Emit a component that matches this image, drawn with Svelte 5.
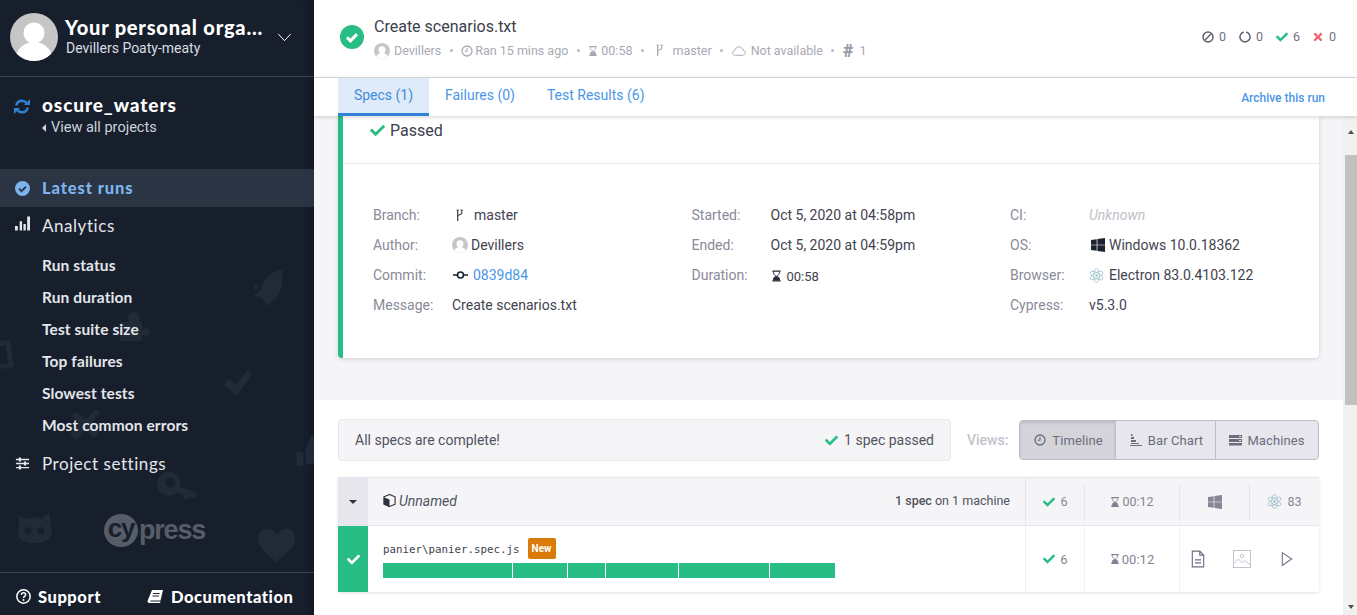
<script>
  const subNav = ['Run status', 'Run duration', 'Test suite size', 'Top failures', 'Slowest tests', 'Most common errors'];
  const bars = [129, 54, 37, 72, 90, 65];
  const checkD = 'M173.9 439.4l-166.4-166.4c-10-10-10-26.2 0-36.2l36.2-36.2c10-10 26.2-10 36.2 0L192 312.7 432.1 72.6c10-10 26.2-10 36.2 0l36.2 36.2c10 10 10 26.2 0 36.2l-294.4 294.4c-10 10-26.2 10-36.2 0z';
  const winD = 'M0 2.200 6.500 1.300v6.300H0zM7.300 1.200 16 0v7.600H7.300zM0 8.400h6.500v6.300L0 13.800zM7.300 8.400H16V16l-8.700-1.200z';
</script>

{#snippet check(cls)}
  <svg class="ic {cls}" viewBox="0 0 512 512" fill="currentColor"><path d={checkD} /></svg>
{/snippet}
{#snippet hourglass(cls)}
  <svg class="ic {cls}" viewBox="0 0 12 12" fill="none" stroke="currentColor">
    <path d="M1.500.7h9M1.500 11.300h9" stroke-width="1.400" />
    <path d="M2.800 1v2c0 1.600 2 2.300 2.800 3-.8.7-2.800 1.400-2.800 3v2M9.200 1v2c0 1.600-2 2.300-2.800 3 .8.7 2.800 1.400 2.800 3v2" stroke-width="1" />
    <path d="M2.800 11V9c0-1.300 2-2.200 3.200-3 1.200.8 3.200 1.700 3.200 3v2z" fill="currentColor" stroke="none" />
  </svg>
{/snippet}
{#snippet clock(cls)}
  <svg class="ic {cls}" viewBox="0 0 12 12"><circle cx="6" cy="6" r="5" fill="none" stroke="currentColor" stroke-width="1.300" /><path d="M6 3v3.300H3.800" fill="none" stroke="currentColor" stroke-width="1.100" /></svg>
{/snippet}
{#snippet branch(cls)}
  <svg class="ic {cls}" viewBox="0 0 10 14" fill="none" stroke="currentColor"><path d="M3 1v12" stroke-width="1.400" /><path d="M3 8c0-2 4-1.500 4.500-3.500V1" stroke-width="1.200" /><path d="M1.500 1h3M6 1h3" stroke-width="1" /></svg>
{/snippet}
{#snippet avatar(cls)}
  <svg class="ic {cls}" viewBox="0 0 48 48">
    <defs><clipPath id="av-{cls}"><circle cx="24" cy="24" r="24" /></clipPath></defs>
    <circle cx="24" cy="24" r="24" fill="#c6c6c6" />
    <g clip-path="url(#av-{cls})" fill="#fff"><circle cx="24" cy="20" r="10.500" /><ellipse cx="24" cy="45" rx="18" ry="16" /></g>
  </svg>
{/snippet}
{#snippet windows(cls)}
  <svg class="ic {cls}" viewBox="0 0 16 16" fill="currentColor"><path d={winD} /></svg>
{/snippet}
{#snippet electron(cls)}
  <svg class="ic {cls}" viewBox="0 0 16 16" fill="none" stroke="#9fc4ca" stroke-width=".9">
    <ellipse cx="8" cy="8" rx="7.500" ry="3" transform="rotate(30 8 8)" />
    <ellipse cx="8" cy="8" rx="7.500" ry="3" transform="rotate(-30 8 8)" />
    <ellipse cx="8" cy="8" rx="7.500" ry="3" transform="rotate(90 8 8)" />
    <circle cx="8" cy="8" r="1" fill="#9fc4ca" />
  </svg>
{/snippet}

<div class="app">
  <aside class="side">
    <svg class="deco" viewBox="0 0 314 615" width="314" height="615" fill="#212b38">
      <path d="M282 270c-12 2-20 10-22 21l-6 5 6 1 5 5 1 5 5-6c9-4 13-16 11-31zM258 284l-5 2 3 5zM268 300l2 5 3-6z" />
      <path d="M120 322h9c-2-7 1-10 5-10s7 3 5 10h3v8c5-3 8-1 8 2s-3 5-8 3v6h-22z" />
      <path d="M-8 342 10 340l4 27-20 3-1 6-8 1-1-30zM-3 347l-2 18 13-1-2-19z" />
      <path d="M224 385l5-6 7 6 11-15 5 4-15 22z" />
      <path d="M70 434l10-10-9-8 6-4 9 8 10-11 4 4-9 11 8 8-5 6-8-8-10 10z" />
      <path d="M296 452l7-1 1 14-7 1zM305 451l6-15 3-1v28l-8 2z" />
      <path d="M171 472a12 12 0 0 1 9 15l16 5-1 7-6-2-1 3-5-2 1-3-7-2a12 12 0 1 1-6-21zM170 478a5 5 0 1 0 2 .2z" />
      <path d="M19 515l7 4c5-2 11-2 15 0l8-6 2 14c3 9-2 16-17 16s-18-7-15-16zM28 527a3.500 4 0 1 0 .1 0zM41 527a3.500 4 0 1 0 .1 0z" fill-rule="evenodd" />
      <path d="M276 562c-9-8-18-14-18-24 0-7 6-10 11-9 4 1 7 3 8 6 2-4 6-7 10-6 6 0 8 6 8 10 0 9-10 15-19 23z" />
    </svg>

    <div class="logo"><span class="cy">cy</span><span class="press">press</span></div>

    <header class="org">
      {@render avatar('org-av')}
      <div class="org-txt">
        <div class="org-name">Your personal orga...</div>
        <div class="org-sub">Devillers Poaty-meaty</div>
      </div>
      <svg class="chev" viewBox="0 0 16 10"><path d="M1 1l7 7.500L15 1" fill="none" stroke="#fff" stroke-width="1.100" /></svg>
    </header>

    <div class="proj">
      <svg class="sync" viewBox="0 0 18 17" fill="none" stroke="#2f82d0" stroke-width="2.400">
        <path d="M3.200 7.500C3.800 4.500 6 2.700 9 2.700c2 0 3.500.8 4.600 2.300" />
        <path d="M14.800 9.500c-.6 3-2.800 4.800-5.800 4.800-2 0-3.500-.8-4.600-2.300" />
        <path d="M17 1v6h-6z" fill="#2f82d0" stroke="none" />
        <path d="M1 16v-6h6z" fill="#2f82d0" stroke="none" />
      </svg>
      <div>
        <div class="proj-name">oscure_waters</div>
        <div class="proj-back"><i class="caret"></i>View all projects</div>
      </div>
    </div>

    <nav class="nav">
      <a class="item on">
        <svg class="nav-ic" viewBox="0 0 14 14"><circle cx="7" cy="7" r="7" fill="#7db3ee" /><path d="M3.800 7.200l2.300 2.300 4.200-4.300" fill="none" stroke="#2a3442" stroke-width="1.700" /></svg>
        Latest runs
      </a>
      <a class="item up">
        <svg class="nav-ic tall" viewBox="0 0 16 16" fill="#e4e6ea"><path d="M0 10h3v5H0zM5 5h2.500v10H5zM9 8h2.500v7H9zM13 0h3v15h-3z" /></svg>
        Analytics
      </a>
      <ul class="sub">
        {#each subNav as s}<li>{s}</li>{/each}
      </ul>
      <a class="item">
        <svg class="nav-ic" viewBox="0 0 16 14" fill="#e4e6ea"><path d="M1 2h14v1.400H1zM1 6.300h14v1.400H1zM1 10.600h14V12H1z" /><path d="M4 .5h2.400v4.400H4zM9.500 4.800h2.400v4.400H9.500zM4 9.100h2.400v4.400H4z" /></svg>
        Project settings
      </a>
    </nav>

    <footer class="foot">
      <a class="f-link">
        <svg class="f-ic" viewBox="0 0 14 14"><circle cx="7" cy="7" r="6.200" fill="none" stroke="#fff" stroke-width="1.400" /><path d="M5 5.400C5 4.200 6 3.600 7 3.600c1.200 0 2 .7 2 1.700 0 1.500-2 1.500-2 3" fill="none" stroke="#fff" stroke-width="1.400" /><circle cx="7" cy="10.300" r=".9" fill="#fff" /></svg>
        Support
      </a>
      <a class="f-link">
        <svg class="f-ic book" viewBox="0 0 16 14"><path d="M5 0h11l-2.500 10.500H4c-1 0-1.300.9-.2 1h9.700l-.3 1.500H2.500C.8 13 .3 11.700.7 10.500zM6 3v1h6.500l.3-1zM5.500 5.500v1H12l.3-1z" fill="#fff" fill-rule="evenodd" /></svg>
        Documentation
      </a>
    </footer>
  </aside>

  <main class="main">
    <div class="top">
      <svg class="big-ok" viewBox="0 0 24 24"><circle cx="12" cy="12" r="12" fill="#27bd85" /><path d="M7 12.400l3.500 3.500 6.500-6.800" fill="none" stroke="#fff" stroke-width="3" /></svg>
      <div class="top-txt">
        <div class="title">Create scenarios.txt</div>
        <div class="meta">
          <span class="m">{@render avatar('m-av')}Devillers</span><i class="dot"></i>
          <span class="m">{@render clock('m-ic')}Ran 15 mins ago</span><i class="dot"></i>
          <span class="m">{@render hourglass('m-hg')}00:58</span><i class="dot"></i>
          <span class="m">{@render branch('m-br')}master</span><i class="dot"></i>
          <span class="m"><svg class="ic m-cloud" viewBox="0 0 14 10"><path d="M3.500 9.300C1.800 9.300.7 8.200.7 6.800c0-1.300 1-2.300 2.200-2.400C3.300 2.300 5 .8 7 .8c2 0 3.700 1.400 4 3.400 1.300.2 2.300 1.300 2.300 2.600 0 1.400-1.100 2.500-2.800 2.500z" fill="none" stroke="currentColor" stroke-width="1" /></svg>Not available</span><i class="dot"></i>
          <span class="m"><b class="hash">#</b>1</span>
        </div>
      </div>
      <div class="stats">
        <span class="st"><svg class="ic st-ic" viewBox="0 0 12 12" fill="none" stroke="#5f5f70" stroke-width="1.500"><circle cx="6" cy="6" r="5" /><path d="M3 9l6-6" /></svg>0</span>
        <span class="st"><svg class="ic st-ic" viewBox="0 0 12 12" fill="none" stroke="#5f5f70" stroke-width="1.500"><path d="M4.800 1.100a5 5 0 1 0 2.400 0" /></svg>0</span>
        <span class="st">{@render check('st-chk')}6</span>
        <span class="st"><svg class="ic st-x" viewBox="0 0 352 512" fill="currentColor"><path d="M242.700 256l100-100c12.300-12.300 12.300-32.200 0-44.500l-22.200-22.300c-12.300-12.300-32.200-12.300-44.500 0L176 189.300 75.900 89.200c-12.300-12.300-32.200-12.300-44.500 0L9.200 111.500c-12.300 12.300-12.300 32.200 0 44.500l100 100-100 100c-12.300 12.300-12.300 32.200 0 44.500l22.200 22.200c12.300 12.300 32.200 12.300 44.500 0L176 322.700l100 100c12.300 12.300 32.200 12.300 44.500 0l22.200-22.200c12.300-12.300 12.300-32.200 0-44.500z" /></svg>0</span>
      </div>
    </div>

    <div class="tabs">
      <a class="tab active">Specs (1)</a>
      <a class="tab">Failures (0)</a>
      <a class="tab">Test Results (6)</a>
      <a class="archive">Archive this run</a>
    </div>

    <div class="body">
      <div class="scroll">
        <section class="gray">
          <div class="card">
            <div class="passed">{@render check('pass-chk')}Passed</div>
            <div class="details">
              <div class="col">
                <div class="d"><span class="k">Branch:</span><span class="v">{@render branch('d-br')}master</span></div>
                <div class="d"><span class="k">Author:</span><span class="v">{@render avatar('d-av')}Devillers</span></div>
                <div class="d"><span class="k">Commit:</span><span class="v"><svg class="ic d-commit" viewBox="0 0 15 8"><path d="M0 4h4M11 4h4" stroke="#161f2d" stroke-width="1.500" /><circle cx="7.500" cy="4" r="3" fill="none" stroke="#161f2d" stroke-width="1.600" /></svg><a class="link">0839d84</a></span></div>
                <div class="d"><span class="k">Message:</span><span class="v">Create scenarios.txt</span></div>
              </div>
              <div class="col">
                <div class="d"><span class="k">Started:</span><span class="v">Oct 5, 2020 at 04:58pm</span></div>
                <div class="d"><span class="k">Ended:</span><span class="v">Oct 5, 2020 at 04:59pm</span></div>
                <div class="d"><span class="k">Duration:</span><span class="v dur">{@render hourglass('d-hg')}00:58</span></div>
              </div>
              <div class="col">
                <div class="d"><span class="k">CI:</span><span class="v unk">Unknown</span></div>
                <div class="d"><span class="k">OS:</span><span class="v">{@render windows('d-win')}Windows 10.0.18362</span></div>
                <div class="d"><span class="k">Browser:</span><span class="v">{@render electron('d-el')}Electron 83.0.4103.122</span></div>
                <div class="d"><span class="k">Cypress:</span><span class="v">v5.3.0</span></div>
              </div>
            </div>
          </div>
        </section>

        <section class="white">
          <div class="bar-row">
            <div class="status">
              <span>All specs are complete!</span>
              <span class="ok">{@render check('ok-chk')}1 spec passed</span>
            </div>
            <span class="views">Views:</span>
            <div class="btns">
              <button class="btn cur">{@render clock('b-ic')}Timeline</button>
              <button class="btn"><svg class="ic b-ic" viewBox="0 0 12 12" fill="currentColor"><path d="M0 11h12v1H0zM1 0h1.500v2H1zM1 3h3v2H1zM1 6h5v2H1zM1 9h8v1H1z" /></svg>Bar Chart</button>
              <button class="btn"><svg class="ic b-ic wide" viewBox="0 0 13 12" fill="currentColor"><path d="M0 1h13v3H0zM0 5h13v3H0zM0 9h13v2.500H0z" /><path d="M10 2h2v1h-2zM10 6h2v1h-2z" fill="#e6e6ec" /></svg>Machines</button>
            </div>
          </div>

          <div class="table">
            <div class="trow head">
              <div class="toggle"><i class="down"></i></div>
              <div class="name">
                <svg class="ic box" viewBox="0 0 14 14"><path d="M7 .5l6 2.500v8l-6 2.500L1 11V3z" fill="none" stroke="#2d3340" stroke-width="1.200" /><path d="M1 3.500l6 2.500v8L1 11z" fill="#2d3340" /></svg>
                <em>Unnamed</em>
                <span class="mach"><b>1 spec</b> on 1 machine</span>
              </div>
              <div class="hc"><span class="inner first">{@render check('t-chk')}6</span></div>
              <div class="hc"><span class="inner">{@render hourglass('t-hg')}00:12</span></div>
              <div class="hc"><span class="inner">{@render windows('t-win')}</span></div>
              <div class="hc"><span class="inner">{@render electron('t-el')}83</span></div>
            </div>
            <div class="trow item-row">
              <div class="okcell">{@render check('w-chk')}</div>
              <div class="spec">
                <div class="spec-top"><code>panier\panier.spec.js</code><span class="new">New</span></div>
                <div class="segs">
                  {#each bars as b}<i style="width:{b}px"></i>{/each}
                </div>
              </div>
              <div class="rc first-rc">{@render check('t-chk')}6</div>
              <div class="rc">{@render hourglass('t-hg')}00:12</div>
              <div class="rc actions">
                <svg class="ic act file" viewBox="0 0 16 20" fill="none" stroke="#6f6f80" stroke-width="1.300"><path d="M1.500 1h8.500l4.500 4.500V19h-13zM10 1v4.500h4.500M4.500 11h7M4.500 14.500h7" /></svg>
                <svg class="ic act img" viewBox="0 0 20 20" fill="none" stroke="#bdbdc8" stroke-width="1"><rect x=".5" y=".5" width="19" height="19" /><circle cx="10" cy="6.500" r="1.800" /><path d="M1 15l5-5 4 4 3-2.500 6 5" /></svg>
                <svg class="ic act play" viewBox="0 0 14 18" fill="none" stroke="#6f6f80" stroke-width="1.200"><path d="M1.500 1.500l11 7.500-11 7.500z" /></svg>
              </div>
            </div>
          </div>
        </section>
      </div>
      <div class="sb">
        <i class="sb-up"></i>
        <div class="sb-thumb"></div>
        <i class="sb-down"></i>
      </div>
    </div>
  </main>
</div>

<style>
  :global(body) { margin: 0; font-family: Roboto, sans-serif; background: #fff; overflow: hidden; }
  a { cursor: pointer; }
  .app { display: flex; height: 615px; width: 1357px; overflow: hidden; }
  .ic { display: block; flex: none; }

  /* Sidebar */
  .side { position: relative; flex: none; width: 314px; height: 615px; display: flex; flex-direction: column; background: #171f2d; color: #fff; font-family: Lato, sans-serif; box-shadow: inset -10px 0 10px -8px rgba(0,0,0,.35); }
  .deco { position: absolute; left: 0; top: 0; pointer-events: none; }
  .logo { position: absolute; left: 104px; top: 514px; display: flex; align-items: center; font-family: "Liberation Sans", sans-serif; font-weight: 700; letter-spacing: -1.200px; }
  .cy { width: 34px; height: 33px; border-radius: 50%; background: #565d68; color: #171f2d; font-size: 26px; line-height: 29px; text-align: center; }
  .press { color: #565d68; font-size: 27px; line-height: 33px; margin-left: 1px; }
  .org { position: relative; height: 76px; display: flex; align-items: center; padding-left: 10px; border-bottom: 1px solid #3a4150; }
  :global(.org-av) { width: 48px; height: 48px; margin-top: -2px; }
  .org-txt { margin: -5px 0 0 7px; width: 212px; }
  .org-name { font-weight: 900; font-size: 20px; line-height: 24px; letter-spacing: .8px; white-space: nowrap; color: #fff; }
  .org-sub { font-family: Roboto, sans-serif; font-size: 14px; line-height: 18px; color: #d8dce2; margin: 0 0 0 1px; }
  .chev { width: 15px; height: 9px; margin-top: -2px; }
  .proj { position: relative; display: flex; padding: 17px 0 0 13px; height: 75px; }
  .sync { width: 18px; height: 17px; margin-top: 4px; margin-right: 11px; }
  .proj-name { font-weight: 900; font-size: 19px; line-height: 22px; letter-spacing: .9px; }
  .proj-back { font-family: Roboto, sans-serif; font-size: 14.500px; line-height: 22px; color: #ccd2da; display: flex; align-items: center; margin-top: 1px; }
  .caret { width: 0; height: 0; border: 4px solid transparent; border-right: 4px solid #ccd2da; border-left: 0; margin-right: 5px; }
  .nav { position: relative; display: flex; flex-direction: column; }
  .item { height: 38px; display: flex; align-items: center; padding-left: 15px; font-size: 17px; letter-spacing: .55px; color: #e4e6ea; font-weight: 400; }
  .item.up { padding-bottom: 2px; height: 36px; }
  .item.on { background: #2a3442; color: #7db3ee; font-weight: 900; font-size: 16.500px; letter-spacing: .9px; }
  .nav-ic { width: 15px; height: 15px; margin-right: 12px; flex: none; }
  .nav-ic.tall { height: 16px; margin-top: -3px; }
  .sub { list-style: none; margin: 0; padding: 4px 0 3px 42px; }
  .sub li { height: 32px; line-height: 32px; font-size: 15.500px; font-weight: 700; color: #e4e6ea; letter-spacing: .1px; }
  .foot { position: absolute; left: 0; right: 0; bottom: 0; height: 37px; padding-top: 5px; border-top: 1px solid #3a4150; display: flex; align-items: center; padding-left: 16px; gap: 46px; }
  .f-link { display: flex; align-items: center; font-weight: 900; font-size: 16.500px; letter-spacing: .55px; color: #fff; }
  .f-ic { width: 15px; height: 15px; margin-right: 7px; }
  .f-ic.book { width: 16px; height: 14px; margin-right: 8px; }

  /* Main */
  .main { flex: 1; min-width: 0; display: flex; flex-direction: column; color: #3b3f4c; }
  .top { height: 77px; border-bottom: 1px solid #dcdce0; display: flex; align-items: center; padding: 0 21px 0 26px; box-sizing: content-box; }
  .big-ok { width: 24px; height: 24px; flex: none; margin-top: -3px; }
  .top-txt { margin-left: 10px; }
  .title { font-size: 16px; line-height: 20px; color: #3c404c; margin-top: -1px; }
  .meta { display: flex; align-items: center; font-size: 12.500px; color: #a9a9b5; margin-top: 5px; height: 17px; white-space: nowrap; }
  .m { display: flex; align-items: center; }
  .dot { width: 3px; height: 3px; border-radius: 50%; background: #b8b8c2; margin: 0 8.500px; flex: none; }
  :global(.m-av) { width: 16px; height: 16px; margin-right: 4px; }
  :global(.m-ic) { width: 12px; height: 12px; margin-right: 2px; }
  :global(.m-hg) { width: 10px; height: 12px; margin-right: 3px; }
  :global(.m-br) { width: 9px; height: 13px; margin: 0 8px 0 3px; }
  .m-cloud { width: 14px; height: 10px; margin-right: 5px; }
  .hash { font-weight: 900; font-size: 18px; margin-right: 6px; color: #9a9aa6; }
  .stats { margin-left: auto; display: flex; align-items: center; gap: 13px; font-size: 12.500px; color: #6f6f7e; margin-top: -4px; }
  .st { display: flex; align-items: center; }
  .st-ic { width: 12px; height: 12px; margin-right: 5px; }
  :global(.st-chk) { width: 12px; height: 12px; margin-right: 5px; color: #27bd85; }
  .st-x { width: 10px; height: 12px; margin-right: 6px; color: #f0616d; }

  .tabs { position: relative; z-index: 2; height: 38px; flex: none; display: flex; padding-left: 24px; background: #fff; box-shadow: 0 1px 4px rgba(0,0,0,.18); font-size: 14px; color: #4a96e6; }
  .tab { display: flex; align-items: center; padding: 0 16px 4px; box-sizing: border-box; height: 38px; }
  .tab.active { background: #dfebf8; border-bottom: 3px solid #2f82d8; width: 91px; padding: 0 0 1px; justify-content: center; color: #3f8ada; }
  .archive { margin-left: auto; margin-right: 32px; align-self: center; font-size: 12px; font-weight: 500; margin-top: 1px; }

  .body { flex: 1; min-height: 0; display: flex; }
  .scroll { flex: 1; min-width: 0; overflow: hidden; }
  .sb { position: relative; flex: none; width: 14px; background: #f1f1f1; display: flex; flex-direction: column; align-items: flex-end; }
  .sb-up, .sb-down { width: 12px; height: 0; }
  .sb-up { height: 39px; position: relative; }
  .sb-up::after { content: ""; position: absolute; left: 3px; top: 14px; border: 3.500px solid transparent; border-top: 0; border-bottom: 4px solid #505050; }
  .sb-thumb { width: 12px; height: 250px; background: #c1c1c1; }
  .sb-down { position: absolute; right: 0; bottom: 6px; height: 4px; }
  .sb-down::after { content: ""; position: absolute; left: 3px; top: 0; border: 3.500px solid transparent; border-bottom: 0; border-top: 4px solid #505050; }

  .gray { background: #f5f5f8; padding: 0 24px 42px; }
  .card { background: #fff; border-left: 5px solid #27bd85; border-radius: 0 0 4px 4px; box-shadow: 0 1px 4px rgba(60,60,90,.2); height: 242px; }
  .passed { height: 48px; box-sizing: border-box; border-bottom: 1px solid #e8e8ec; display: flex; align-items: flex-start; padding: 5px 0 0 27px; font-size: 16px; line-height: 19px; color: #3c404c; }
  :global(.pass-chk) { width: 15px; height: 15px; color: #27bd85; margin: 2px 5px 0 0; }
  .details { display: grid; grid-template-columns: 318.500px 318.500px 1fr; padding: 36px 0 0 30px; }
  .d { display: flex; height: 30px; align-items: center; font-size: 14px; }
  .k { width: 79px; flex: none; color: #8a8a98; }
  .v { display: flex; align-items: center; color: #3f434f; }
  .link { color: #4a96e6; }
  .unk { font-style: italic; color: #c0c0ca; }
  .dur { font-size: 13px; margin-top: 3px; }
  :global(.d-br) { width: 9px; height: 13px; margin: 0 10px 0 3px; color: #3f434f; }
  :global(.d-av) { width: 16px; height: 16px; margin-right: 3px; }
  .d-commit { width: 15px; height: 8px; margin: 0 5px 0 1px; }
  :global(.d-hg) { width: 11px; height: 12px; margin: -1px 5px 0 0; color: #262b38; }
  :global(.d-win) { width: 14px; height: 14px; margin: 0 4px 0 2px; color: #1c2230; }
  :global(.d-el) { width: 15px; height: 15px; margin-right: 5px; }

  .white { padding: 19px 24px 0; background: #fff; }
  .bar-row { display: flex; align-items: center; height: 42px; }
  .status { width: 613px; height: 42px; box-sizing: border-box; background: #f5f5f8; border: 1px solid #e6e6ec; border-radius: 4px; display: flex; align-items: center; justify-content: space-between; padding: 0 16px; font-size: 14px; color: #50545f; }
  .ok { display: flex; align-items: center; }
  :global(.ok-chk) { width: 13px; height: 13px; color: #27bd85; margin-right: 6px; }
  .views { margin-left: 16px; width: 52px; font-size: 14px; font-weight: 500; color: #c2c2cb; }
  .btns { flex: 1; display: flex; height: 40px; box-sizing: border-box; border: 1px solid #bdbdc8; border-radius: 4px; overflow: hidden; background: #e6e6ec; }
  .btn { border: 0; border-left: 1px solid #bdbdc8; background: none; display: flex; align-items: center; justify-content: center; padding: 0; font: 13px Roboto, sans-serif; letter-spacing: .1px; color: #6c6c7c; flex: 1; }
  .btn:first-child { border-left: 0; flex: none; width: 95px; padding-left: 2px; background: #d4d4da; box-shadow: inset 0 2px 3px rgba(0,0,0,.12); }
  .btn:nth-child(2) { flex: none; width: 100px; padding-left: 2px; }
  :global(.b-ic) { width: 12px; height: 12px; margin-right: 6px; }
  .b-ic.wide { width: 13px; margin-right: 5px; }

  .table { margin-top: 16px; box-shadow: 0 1px 3px rgba(60,60,90,.15); }
  .trow { display: grid; grid-template-columns: 30px 657px 59px 95px 70px 70px; }
  .head { height: 49px; background: #f5f5f8; border-top: 1px solid #e6e6ec; border-bottom: 1px solid #e6e6ec; box-sizing: border-box; align-items: stretch; }
  .toggle { background: #e6e6ec; display: flex; align-items: center; justify-content: center; }
  .down { border: 4px solid transparent; border-bottom: 0; border-top: 4px solid #2d3340; }
  .name { display: flex; align-items: center; padding: 0 15px 2px; font-size: 14px; color: #50545f; border-right: 1px solid #e6e6ec; margin-right: -1px; }
  .box { width: 13px; height: 13px; margin-right: 3px; }
  .mach { margin-left: auto; font-size: 12.500px; }
  .mach b { font-weight: 500; }
  .hc { display: flex; align-items: center; justify-content: center; font-size: 12.500px; color: #868694; }
  .inner { display: flex; align-items: center; justify-content: center; width: 100%; height: 37px; border-left: 1px solid #e6e6ec; }
  .inner.first { border-left: 0; padding-left: 2px; box-sizing: border-box; }
  :global(.t-chk) { width: 12px; height: 12px; color: #27bd85; margin-right: 5px; }
  :global(.t-hg) { width: 10px; height: 12px; color: #808090; margin-right: 2px; }
  :global(.t-win) { width: 14px; height: 14px; color: #868694; }
  :global(.t-el) { width: 15px; height: 15px; margin-right: 5px; }

  .item-row { height: 66px; background: #fff; }
  .okcell { background: #27bd85; display: flex; align-items: center; justify-content: center; }
  :global(.w-chk) { width: 13px; height: 13px; color: #fff; }
  .spec { padding: 12px 0 0 15px; border-right: 1px solid #f0f0f3; margin-right: -1px; }
  .spec-top { display: flex; align-items: center; height: 21px; }
  code { font-family: "DejaVu Sans Mono", monospace; font-size: 10.800px; color: #3f434f; padding-top: 1px; }
  .new { margin-left: 8px; width: 28px; height: 21px; line-height: 21px; text-align: center; background: #d97b06; color: #fff; font-weight: 700; font-size: 10px; border-radius: 2px; }
  .segs { display: flex; gap: 1px; margin-top: 4px; }
  .segs i { display: block; height: 15px; background: #27bd85; }
  .rc { display: flex; align-items: center; justify-content: center; font-size: 13px; color: #868694; border-left: 1px solid #f0f0f3; }
  .first-rc { border-left: 0; padding-left: 2px; }
  .actions { grid-column: span 2; justify-content: flex-start; padding-left: 11px; gap: 28px; }
  .act.file { width: 14px; height: 18px; }
  .act.img { width: 18px; height: 18px; }
  .act.play { width: 12px; height: 16px; margin-left: 2px; }
</style>
